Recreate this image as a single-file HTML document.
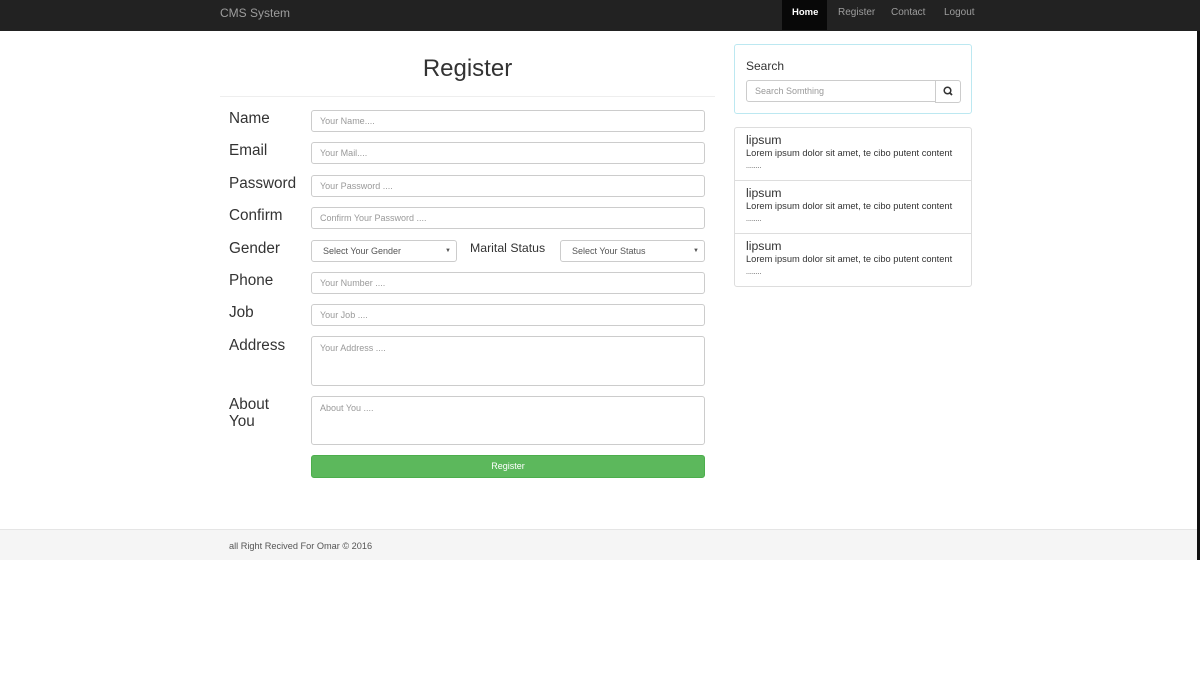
<!DOCTYPE html>
<html><head><style>
*{box-sizing:border-box;margin:0;padding:0}
body{width:1200px;height:684px;background:#fff;font-family:"Liberation Sans",Arial,sans-serif;color:#333;position:relative;overflow:hidden}
.a{position:absolute}
.nav{left:0;top:0;width:1200px;height:31px;background:#222}
.nav span{position:absolute;top:7px;font-size:10px;color:#9d9d9d}
.inp{position:absolute;border:1px solid #ccc;border-radius:3px;background:#fff;font-size:9px;color:#999;padding:0 8px;display:flex;align-items:center}
.lbl{position:absolute;font-size:15.3px;color:#333;left:229px;line-height:17px}
.it{font-size:9.3px;line-height:12px}
</style></head><body>
<div class="a nav">
<span style="left:220px;top:6px;font-size:12px">CMS System</span>
<div class="a" style="left:782px;top:0;width:45px;height:30px;background:#080808"></div>
<span style="left:792px;color:#fff;font-weight:bold;font-size:9.5px">Home</span>
<span style="left:838px">Register</span>
<span style="left:891px">Contact</span>
<span style="left:944px">Logout</span>
</div>
<div class="a" style="left:1197px;top:31px;width:3px;height:529px;background:#111"></div>
<div class="a" style="left:220px;top:55px;width:495px;text-align:center;font-size:24px;color:#333">Register</div>
<div class="a" style="left:220px;top:96px;width:495px;height:1px;background:#eee"></div>

<div class="lbl" style="top:110px">Name</div>
<div class="inp" style="left:311px;top:110px;width:394px;height:22px">Your Name....</div>
<div class="lbl" style="top:142px">Email</div>
<div class="inp" style="left:311px;top:142px;width:394px;height:22px">Your Mail....</div>
<div class="lbl" style="top:175px">Password</div>
<div class="inp" style="left:311px;top:175px;width:394px;height:22px">Your Password ....</div>
<div class="lbl" style="top:207px">Confirm</div>
<div class="inp" style="left:311px;top:207px;width:394px;height:22px">Confirm Your Password ....</div>
<div class="lbl" style="top:240px">Gender</div>
<div class="inp" style="left:311px;top:240px;width:146px;height:22px;color:#555;padding-left:11px">Select Your Gender<span style="position:absolute;right:5px;font-size:6px">▼</span></div>
<div class="a" style="left:470px;top:241px;font-size:12.3px">Marital Status</div>
<div class="inp" style="left:560px;top:240px;width:145px;height:22px;color:#555;padding-left:11px">Select Your Status<span style="position:absolute;right:5px;font-size:6px">▼</span></div>
<div class="lbl" style="top:272px">Phone</div>
<div class="inp" style="left:311px;top:272px;width:394px;height:22px">Your Number ....</div>
<div class="lbl" style="top:304px">Job</div>
<div class="inp" style="left:311px;top:304px;width:394px;height:22px">Your Job ....</div>
<div class="lbl" style="top:337px">Address</div>
<div class="inp" style="left:311px;top:336px;width:394px;height:50px;align-items:flex-start;padding-top:6px">Your Address ....</div>
<div class="lbl" style="top:396px">About<br>You</div>
<div class="inp" style="left:311px;top:396px;width:394px;height:49px;align-items:flex-start;padding-top:6px">About You ....</div>
<div class="a" style="left:311px;top:455px;width:394px;height:23px;background:#5cb85c;border:1px solid #4cae4c;border-radius:3px;color:#fff;font-size:9px;text-align:center;line-height:21px">Register</div>

<div class="a" style="left:734px;top:44px;width:238px;height:70px;border:1px solid #bce8f1;border-radius:3px"></div>
<div class="a" style="left:746px;top:59px;font-size:12px">Search</div>
<div class="inp" style="left:746px;top:80px;width:190px;height:22px;border-radius:3px 0 0 3px">Search Somthing</div>
<div class="a" style="left:935px;top:80px;width:26px;height:23px;border:1px solid #ccc;border-radius:0 3px 3px 0">
<svg width="24" height="21" viewBox="0 0 24 21"><circle cx="11.5" cy="9.5" r="3.3" fill="none" stroke="#333" stroke-width="1.5"/><line x1="14" y1="12" x2="16" y2="14" stroke="#333" stroke-width="1.8"/></svg></div>

<div class="a" style="left:734px;top:127px;width:238px;height:160px;border:1px solid #ddd;border-radius:3px"></div>
<div class="a" style="left:735px;top:180px;width:236px;height:1px;background:#ddd"></div>
<div class="a" style="left:735px;top:233px;width:236px;height:1px;background:#ddd"></div>
<div class="a" style="left:746px;top:133px;font-size:12.3px;line-height:14px">lipsum<div class="it">Lorem ipsum dolor sit amet, te cibo putent content<br><span style="font-size:7px">........</span></div></div>
<div class="a" style="left:746px;top:186px;font-size:12.3px;line-height:14px">lipsum<div class="it">Lorem ipsum dolor sit amet, te cibo putent content<br><span style="font-size:7px">........</span></div></div>
<div class="a" style="left:746px;top:239px;font-size:12.3px;line-height:14px">lipsum<div class="it">Lorem ipsum dolor sit amet, te cibo putent content<br><span style="font-size:7px">........</span></div></div>

<div class="a" style="left:0;top:529px;width:1197px;height:31px;background:#f5f5f5;border-top:1px solid #e5e5e5"></div>
<div class="a" style="left:229px;top:541px;font-size:9.2px;color:#555">all Right Recived For Omar © 2016</div>
</body></html>
